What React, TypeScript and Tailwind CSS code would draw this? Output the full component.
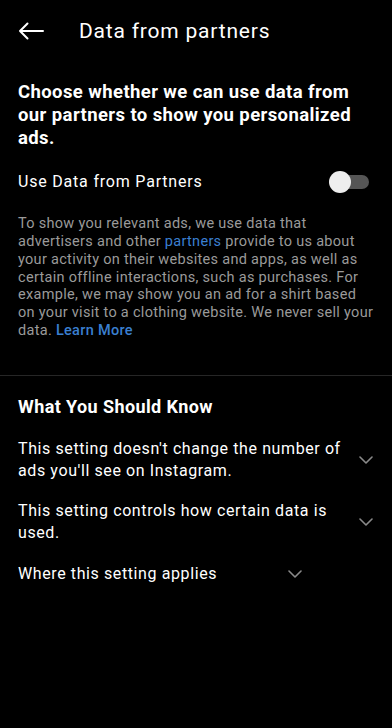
import React from "react";

const Chevron = () => (
  <svg width="14" height="8" viewBox="0 0 14 8" fill="none" className="shrink-0">
    <path d="M1 1L7 7L13 1" stroke="#8a8a8a" strokeWidth="1.6" strokeLinecap="round" strokeLinejoin="round" />
  </svg>
);

export default function App() {
  return (
    <div
      className="w-[392px] h-[728px] bg-black text-white overflow-hidden"
      style={{ fontFamily: "Roboto, 'Noto Sans', sans-serif" }}
    >
      <div className="flex items-center h-[62px] pl-[18px]">
        <svg width="26" height="18" viewBox="0 0 26 18" fill="none">
          <path d="M25 9H2M9.5 1.5L2 9L9.5 16.5" stroke="white" strokeWidth="2" strokeLinecap="round" strokeLinejoin="round" />
        </svg>
        <div className="ml-[35px] text-[21px] tracking-[0.8px] leading-none">Data from partners</div>
      </div>

      <div className="px-[18px] pt-[19px]">
        <div className="text-[18.5px] tracking-[0.4px] leading-[23px] font-bold whitespace-nowrap">
          Choose whether we can use data from
          <br />
          our partners to show you personalized
          <br />
          ads.
        </div>

        <div className="flex items-center justify-between mt-[18px] h-[28px]">
          <div className="text-[16px] tracking-[0.8px]">Use Data from Partners</div>
          <div className="relative w-[40px] h-[22px] mr-[5px]">
            <div className="absolute left-[12px] right-0 top-[4px] h-[14px] rounded-full bg-[#555555]" />
            <div className="absolute left-0 top-0 w-[22px] h-[22px] rounded-full bg-[#eeeeee]" />
          </div>
        </div>

        <div className="mt-[19px] text-[14.5px] tracking-[0.3px] leading-[17.85px] text-[#9a9a9a] whitespace-nowrap">
          To show you relevant ads, we use data that
          <br />
          advertisers and other <span className="text-[#3a7fd0]">partners</span> provide to us about
          <br />
          your activity on their websites and apps, as well as
          <br />
          certain offline interactions, such as purchases. For
          <br />
          example, we may show you an ad for a shirt based
          <br />
          on your visit to a clothing website. We never sell your
          <br />
          data. <span className="text-[#3a7fd0] font-medium">Learn More</span>
        </div>
      </div>

      <div className="mt-[35px] h-px bg-[#262626]" />

      <div className="px-[18px] pt-[20px]">
        <div className="text-[18px] tracking-[0.4px] font-bold leading-[22px]">What You Should Know</div>

        <div className="flex items-center gap-[14px] mt-[20px] pr-[1px]">
          <div className="flex-1 text-[16px] tracking-[0.6px] leading-[22px]">
            This setting doesn't change the number of ads you'll see on Instagram.
          </div>
          <Chevron />
        </div>

        <div className="flex items-center gap-[14px] mt-[18px] pr-[1px]">
          <div className="flex-1 text-[16px] tracking-[0.6px] leading-[22px]">
            This setting controls how certain data is used.
          </div>
          <Chevron />
        </div>

        <div className="flex items-center mt-[19px]">
          <div className="w-[270px] text-[16px] tracking-[0.6px] leading-[22px]">Where this setting applies</div>
          <Chevron />
        </div>
      </div>
    </div>
  );
}
